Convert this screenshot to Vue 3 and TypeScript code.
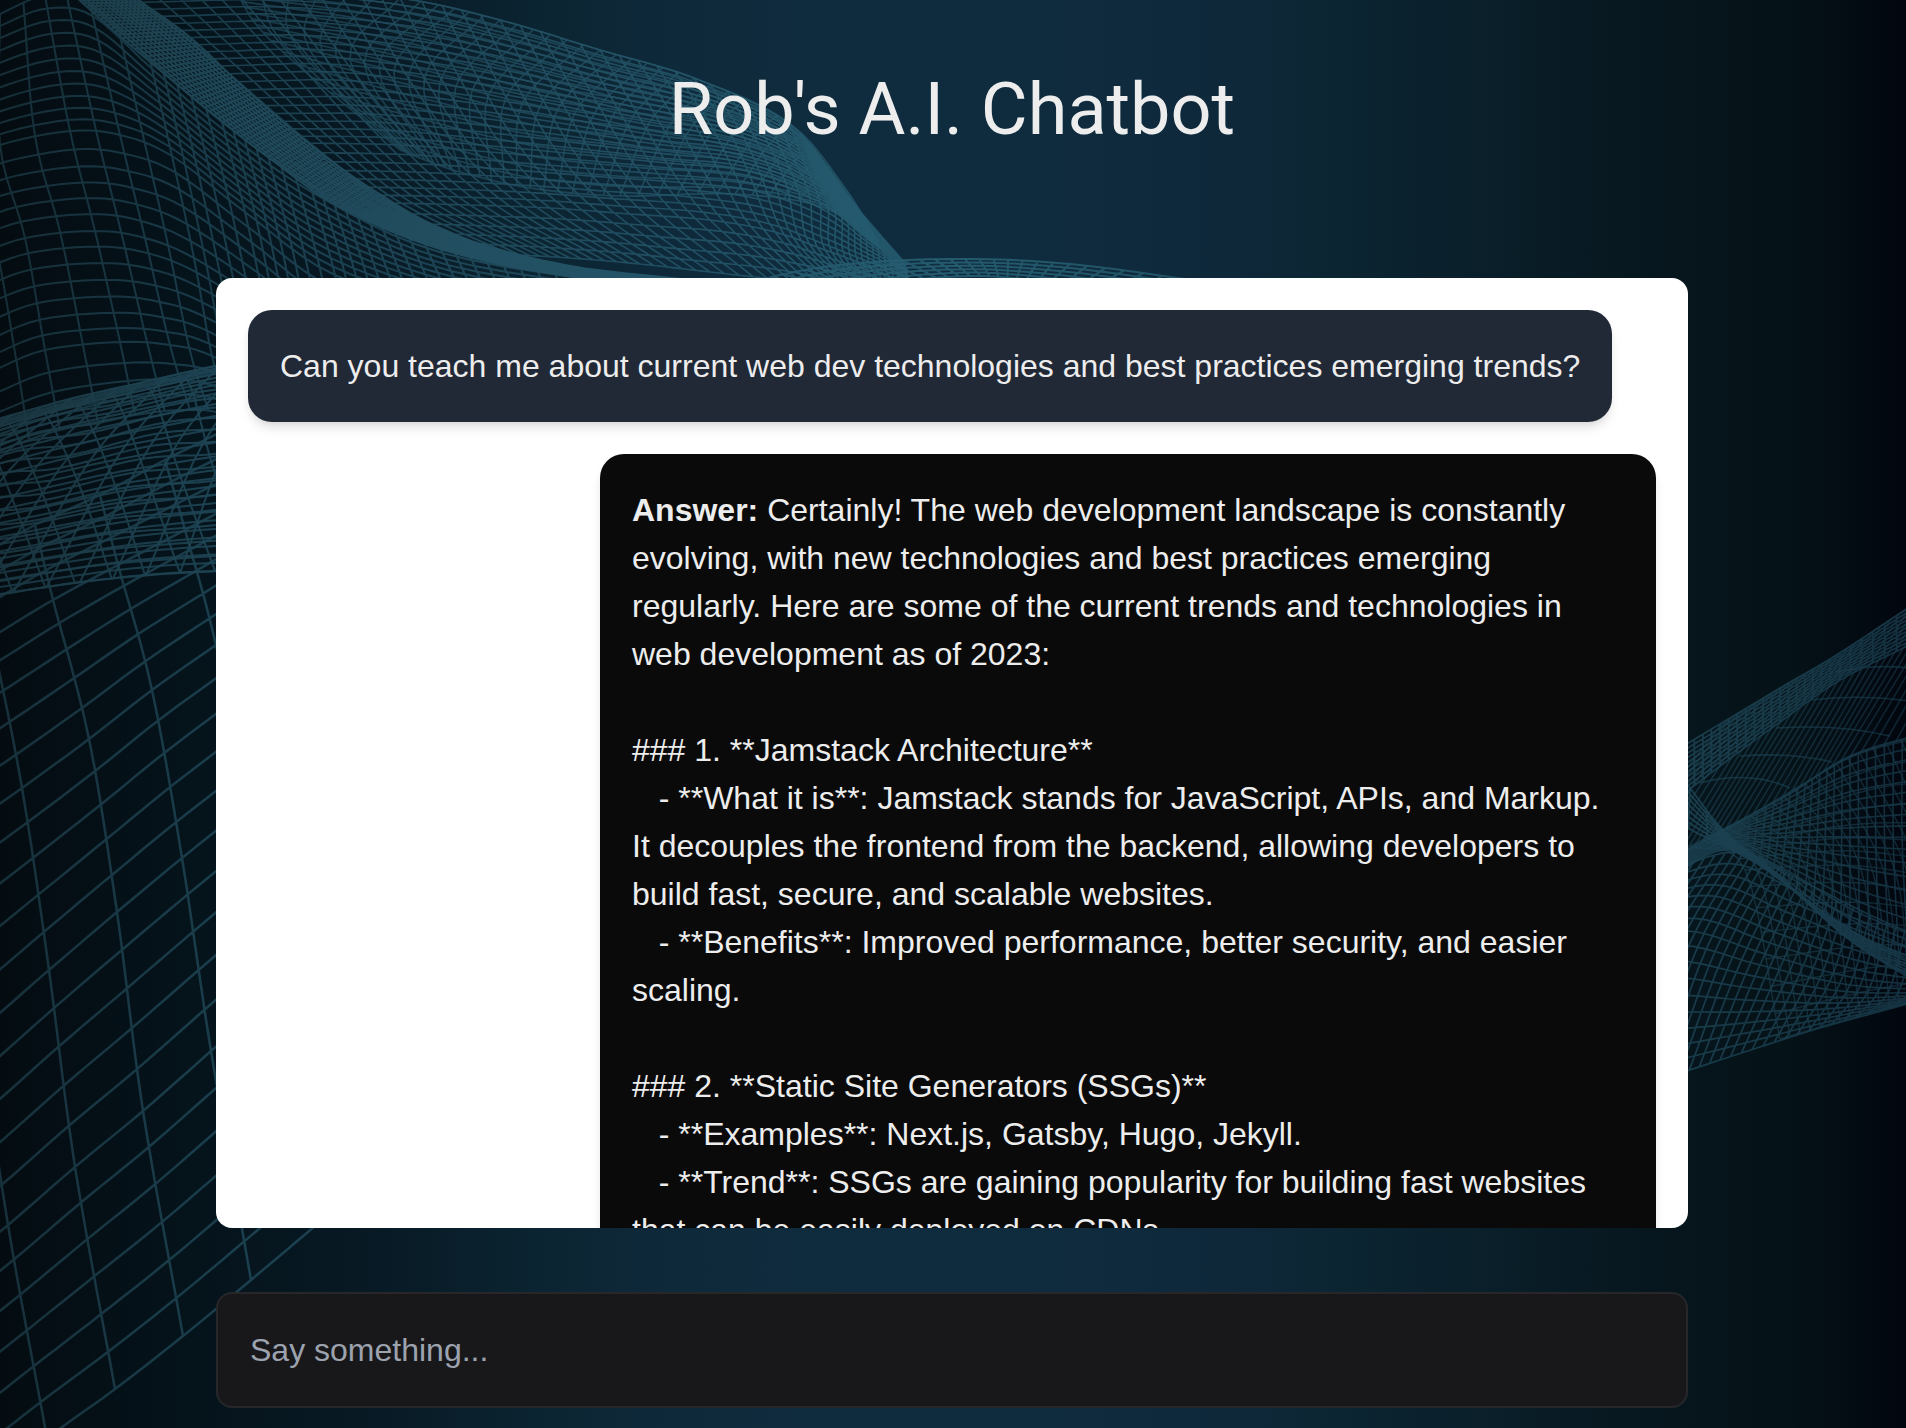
<script setup lang="ts">
import { ref } from 'vue'

type Point = [number, number]

interface Sheet {
  rows: Point[][]
  rowSteps: number[]
  colSteps: number[]
  width: number
  opacity: number
}

interface Message {
  id: number
  role: 'user' | 'assistant'
  text: string
}

const draft = ref('')

const messages: Message[] = [
  {
    id: 1,
    role: 'user',
    text: 'Can you teach me about current web dev technologies and best practices emerging trends?',
  },
  {
    id: 2,
    role: 'assistant',
    text: [
      'Certainly! The web development landscape is constantly evolving, with new technologies and best practices emerging regularly. Here are some of the current trends and technologies in web development as of 2023:',
      '',
      '### 1. **Jamstack Architecture**',
      '   - **What it is**: Jamstack stands for JavaScript, APIs, and Markup. It decouples the frontend from the backend, allowing developers to build fast, secure, and scalable websites.',
      '   - **Benefits**: Improved performance, better security, and easier scaling.',
      '',
      '### 2. **Static Site Generators (SSGs)**',
      '   - **Examples**: Next.js, Gatsby, Hugo, Jekyll.',
      '   - **Trend**: SSGs are gaining popularity for building fast websites that can be easily deployed on CDNs.',
    ].join('\n'),
  },
]

// Catmull-Rom interpolation along one list of values
function spline(values: number[], t: number): number {
  const last = values.length - 1
  const i = Math.min(Math.floor(t), last - 1)
  const f = t - i
  const b = values[i]
  const c = values[i + 1]
  const a = i > 0 ? values[i - 1] : 2 * b - c
  const d = i + 2 <= last ? values[i + 2] : 2 * c - b
  return 0.5 * (2 * b + (c - a) * f + (2 * a - 5 * b + 4 * c - d) * f * f + (3 * b - a - 3 * c + d) * f * f * f)
}

function surface(rows: Point[][], u: number, v: number): Point {
  const xs = rows.map((row) => spline(row.map((p) => p[0]), v))
  const ys = rows.map((row) => spline(row.map((p) => p[1]), v))
  return [spline(xs, u), spline(ys, u)]
}

function stops(steps: number[]): number[] {
  const out: number[] = []
  steps.forEach((n, i) => {
    for (let k = 0; k < n; k++) out.push(i + k / n)
  })
  out.push(steps.length)
  return out
}

function toPath(points: Point[]): string {
  return 'M' + points.map(([x, y]) => `${x.toFixed(1)} ${y.toFixed(1)}`).join('L')
}

// Every sheet is a wire mesh: lines along its rows and lines across them
function meshPath(sheet: Sheet): string {
  const uEnd = sheet.rows.length - 1
  const vEnd = sheet.rows[0].length - 1
  const fine = 6
  const us = Array.from({ length: uEnd * fine + 1 }, (_, i) => i / fine)
  const vs = Array.from({ length: vEnd * fine + 1 }, (_, i) => i / fine)
  const along = stops(sheet.rowSteps).map((u) => toPath(vs.map((v) => surface(sheet.rows, u, v))))
  const across = stops(sheet.colSteps).map((v) => toPath(us.map((u) => surface(sheet.rows, u, v))))
  return along.concat(across).join('')
}

const sheets: Sheet[] = [
  // left hill
  {
    rows: [
      [[-60, 45], [0, 14], [45, -4], [90, 4], [150, 60], [222, 122], [310, 184], [440, 247], [640, 282]],
      [[-50, 168], [0, 145], [70, 131], [120, 135], [172, 156], [245, 212], [335, 275], [470, 315], [660, 340]],
      [[-30, 258], [25, 238], [95, 231], [145, 238], [194, 258], [265, 304], [355, 372], [500, 400], [690, 420]],
      [[-10, 372], [45, 350], [120, 342], [170, 345], [212, 356], [290, 400], [380, 470], [530, 500], [720, 520]],
      [[0, 450], [60, 430], [135, 415], [190, 410], [230, 418], [310, 470], [400, 540], [550, 570], [740, 590]],
    ],
    rowSteps: [11, 6, 7, 4],
    colSteps: [2, 2, 2, 2, 5, 7, 10, 12],
    width: 2,
    opacity: 0.8,
  },
  // ridge
  {
    rows: [
      [[66, -12], [122, 38], [196, 100], [268, 157], [340, 207], [440, 249], [560, 275], [680, 288]],
      [[120, -12], [186, 34], [240, 84], [302, 138], [370, 188], [455, 235], [565, 265], [690, 280]],
    ],
    rowSteps: [14],
    colSteps: [16, 16, 16, 16, 16, 16, 12],
    width: 2,
    opacity: 1,
  },
  // upper sheet
  {
    rows: [
      [[125, -12], [270, -14], [400, -2], [500, 20], [600, 50], [694, 78], [790, 124], [853, 203], [904, 262]],
      [[220, 66], [330, 64], [440, 77], [540, 95], [640, 118], [730, 133], [805, 165], [860, 220], [905, 264]],
      [[310, 143], [400, 145], [490, 152], [580, 160], [670, 168], [750, 176], [820, 202], [866, 238], [906, 268]],
      [[390, 203], [470, 205], [550, 208], [630, 214], [710, 220], [775, 232], [825, 250], [870, 266], [908, 278]],
      [[500, 254], [570, 258], [640, 264], [710, 272], [780, 280], [830, 288], [870, 292], [890, 295], [910, 298]],
    ],
    rowSteps: [11, 10, 7, 5],
    colSteps: [7, 6, 5, 5, 5, 6, 7, 7],
    width: 1.6,
    opacity: 0.85,
  },
  // second layer folded over the upper sheet
  {
    rows: [
      [[230, -20], [400, -2], [500, 20], [600, 50], [694, 78], [790, 124], [845, 188], [878, 242]],
      [[270, 40], [350, 60], [440, 82], [540, 106], [650, 122], [765, 150], [835, 196], [878, 244]],
      [[400, 150], [425, 160], [460, 172], [530, 188], [620, 196], [735, 194], [825, 208], [880, 248]],
    ],
    rowSteps: [10, 8],
    colSteps: [6, 6, 6, 6, 6, 6, 6],
    width: 1.6,
    opacity: 0.75,
  },
  // arch behind the conversation
  {
    rows: [
      [[740, 284], [830, 266], [950, 259], [1070, 264], [1220, 284]],
      [[820, 300], [880, 284], [970, 276], [1050, 282], [1180, 300]],
    ],
    rowSteps: [5],
    colSteps: [8, 8, 8, 8],
    width: 2,
    opacity: 0.9,
  },
  // left belt
  {
    rows: [
      [[-90, 444], [0, 419], [70, 399], [140, 383], [220, 365], [300, 350]],
      [[-70, 456], [15, 432], [85, 414], [155, 398], [230, 382], [310, 367]],
      [[-50, 520], [45, 500], [115, 485], [180, 475], [250, 466], [330, 460]],
      [[-20, 597], [75, 583], [145, 575], [215, 571], [290, 570], [370, 570]],
    ],
    rowSteps: [6, 7, 12],
    colSteps: [3, 2, 2, 2, 3],
    width: 2,
    opacity: 0.9,
  },
  {
    rows: [
      [[-20, 424], [70, 399], [140, 383], [220, 365], [300, 352], [380, 340]],
      [[-120, 530], [-20, 478], [60, 468], [150, 446], [230, 440], [310, 420]],
      [[-220, 612], [-120, 604], [-20, 597], [80, 582], [180, 573], [290, 569]],
    ],
    rowSteps: [8, 9],
    colSteps: [3, 3, 3, 3, 3],
    width: 2,
    opacity: 0.9,
  },
  // lower left plane
  {
    rows: [
      [[-140, 640], [-80, 600], [-25, 560], [35, 525], [100, 495], [165, 460], [235, 425]],
      [[-130, 715], [-70, 675], [-8, 637], [53, 600], [118, 565], [185, 530], [252, 495]],
      [[-112, 885], [-45, 835], [22, 788], [89, 739], [152, 690], [216, 645], [282, 600]],
      [[-88, 1085], [-20, 1030], [49, 970], [117, 912], [182, 858], [248, 805], [312, 750]],
      [[-60, 1280], [8, 1225], [75, 1167], [143, 1111], [211, 1051], [280, 990], [345, 930]],
      [[-20, 1490], [47, 1438], [115, 1389], [183, 1336], [251, 1280], [320, 1222], [390, 1165]],
    ],
    rowSteps: [3, 5, 5, 5, 6],
    colSteps: [1, 1, 1, 1, 1, 1],
    width: 2.5,
    opacity: 0.85,
  },
  // right wing, thin top layer
  {
    rows: [
      [[1720, 726], [1770, 695], [1830, 659], [1890, 620], [1960, 575], [2040, 520]],
      [[1600, 880], [1670, 858], [1725, 830], [1790, 794], [1850, 757], [1930, 735]],
    ],
    rowSteps: [1],
    colSteps: [6, 7, 7, 7, 7],
    width: 1.6,
    opacity: 0.6,
  },
  {
    rows: [
      [[1660, 760], [1720, 724], [1780, 688], [1840, 653], [1920, 600]],
      [[1660, 812], [1720, 766], [1780, 722], [1840, 680], [1920, 640]],
    ],
    rowSteps: [10],
    colSteps: [7, 7, 7, 7],
    width: 1.8,
    opacity: 0.85,
  },
  // right wing, fan that opens from the crossing
  {
    rows: [
      [[1660, 864], [1725, 829], [1790, 793], [1850, 756], [1920, 734]],
      [[1660, 872], [1725, 840], [1785, 842], [1850, 846], [1920, 850]],
      [[1660, 884], [1725, 850], [1780, 880], [1850, 940], [1930, 988]],
    ],
    rowSteps: [10, 9],
    colSteps: [8, 8, 8, 8],
    width: 1.6,
    opacity: 0.8,
  },
  {
    rows: [
      [[1690, 846], [1750, 815], [1805, 783], [1860, 753], [1930, 733]],
      [[1745, 870], [1805, 866], [1860, 866], [1920, 875], [1990, 890]],
      [[1780, 1039], [1830, 1024], [1880, 1010], [1930, 998], [1990, 985]],
    ],
    rowSteps: [7, 7],
    colSteps: [5, 5, 5, 5],
    width: 1.4,
    opacity: 0.65,
  },
  // ribbon through the crossing
  {
    rows: [
      [[1655, 742], [1690, 788], [1725, 832], [1775, 872], [1850, 940], [1930, 990]],
      [[1655, 805], [1688, 828], [1728, 848], [1770, 872], [1850, 930], [1930, 965]],
    ],
    rowSteps: [7],
    colSteps: [2, 2, 3, 2, 2],
    width: 1.8,
    opacity: 0.9,
  },
  // right wing, lower body
  {
    rows: [
      [[1650, 878], [1735, 852], [1800, 880], [1870, 915], [1950, 950]],
      [[1600, 960], [1680, 945], [1760, 965], [1850, 985], [1940, 990]],
      [[1540, 1112], [1630, 1089], [1720, 1060], [1820, 1028], [1930, 998]],
    ],
    rowSteps: [8, 8],
    colSteps: [8, 9, 9, 9],
    width: 1.7,
    opacity: 0.85,
  },
]

const meshes = sheets.map((sheet) => ({
  d: meshPath(sheet),
  width: sheet.width,
  opacity: sheet.opacity,
}))

const arcs = [
  'M1700 783Q1750 770 1790 788',
  'M1740 756Q1790 752 1832 762',
  'M1776 728Q1840 724 1890 736',
  'M1810 700Q1860 694 1910 701',
  'M1835 672Q1875 664 1910 668',
].join('')
</script>

<template>
  <div class="page">
    <svg class="backdrop" viewBox="0 0 1906 1428" preserveAspectRatio="xMidYMid slice" aria-hidden="true">
      <defs>
        <linearGradient id="wire" gradientUnits="userSpaceOnUse" x1="0" y1="0" x2="1906" y2="0">
          <stop offset="0" stop-color="#1a3742" />
          <stop offset="0.12" stop-color="#1e4656" />
          <stop offset="0.3" stop-color="#235265" />
          <stop offset="0.5" stop-color="#265f73" />
          <stop offset="0.88" stop-color="#1c4353" />
          <stop offset="1" stop-color="#163646" />
        </linearGradient>
      </defs>
      <g fill="none" stroke="url(#wire)">
        <path
          v-for="(mesh, index) in meshes"
          :key="index"
          :d="mesh.d"
          :stroke-width="mesh.width"
          :opacity="mesh.opacity"
        />
        <path :d="arcs" stroke-width="1.6" opacity="0.7" />
      </g>
    </svg>

    <main class="chat">
      <h1 class="title">Rob's A.I. Chatbot</h1>

      <section class="log" aria-label="Conversation">
        <div v-for="message in messages" :key="message.id" class="bubble" :class="message.role">
          <strong v-if="message.role === 'assistant'">Answer:</strong>{{ message.role === 'assistant' ? ' ' : '' }}{{ message.text }}
        </div>
      </section>

      <form class="composer" @submit.prevent>
        <input v-model="draft" class="field" type="text" placeholder="Say something..." aria-label="Message" />
      </form>
    </main>
  </div>
</template>

<style>
body {
  margin: 0;
  background: #040d14;
}
</style>

<style scoped>
.page {
  position: relative;
  height: 100vh;
  overflow: hidden;
  background: linear-gradient(
    90deg,
    #040c11 0%,
    #05131b 10%,
    #081a25 20%,
    #0b2431 28%,
    #0e293a 35%,
    #0f2c3e 44%,
    #0f2c3e 54%,
    #0e283a 65%,
    #0b2532 70%,
    #0a1f2a 78%,
    #07171f 86%,
    #051217 94%,
    #02060f 100%
  );
  color: #ededed;
  font-family: 'Liberation Sans', Arial, sans-serif;
}

.backdrop {
  position: absolute;
  inset: 0;
  width: 100%;
  height: 100%;
}

.chat {
  position: relative;
  display: flex;
  flex-direction: column;
  box-sizing: border-box;
  height: 100%;
  padding: 64px 218px 20px 216px;
}

.title {
  margin: 0 0 122px;
  font-family: Roboto, sans-serif;
  font-size: 72px;
  font-weight: 400;
  line-height: 92px;
  text-align: center;
}

.log {
  display: flex;
  flex: 1;
  flex-direction: column;
  align-items: flex-start;
  gap: 32px;
  box-sizing: border-box;
  min-height: 0;
  padding: 32px;
  overflow-y: auto;
  scrollbar-width: none;
  border-radius: 16px;
  background: #fff;
}

.bubble {
  flex: none;
  box-sizing: border-box;
  padding: 32px;
  border-radius: 24px;
  box-shadow:
    0 8px 12px -2px rgb(0 0 0 / 10%),
    0 4px 8px -4px rgb(0 0 0 / 10%);
  font-size: 32px;
  line-height: 48px;
  white-space: pre-wrap;
}

.user {
  background: #212836;
}

.assistant {
  align-self: flex-end;
  width: 75%;
  background: #0a0a0a;
}

.composer {
  display: flex;
  margin-top: 64px;
}

.field {
  flex: 1;
  box-sizing: border-box;
  height: 116px;
  padding: 32px;
  border: 2px solid #27272a;
  border-radius: 16px;
  outline: none;
  background: #18181b;
  color: #ededed;
  font-family: inherit;
  font-size: 32px;
  line-height: 48px;
}

.field::placeholder {
  color: #9ca3af;
  opacity: 1;
}
</style>
